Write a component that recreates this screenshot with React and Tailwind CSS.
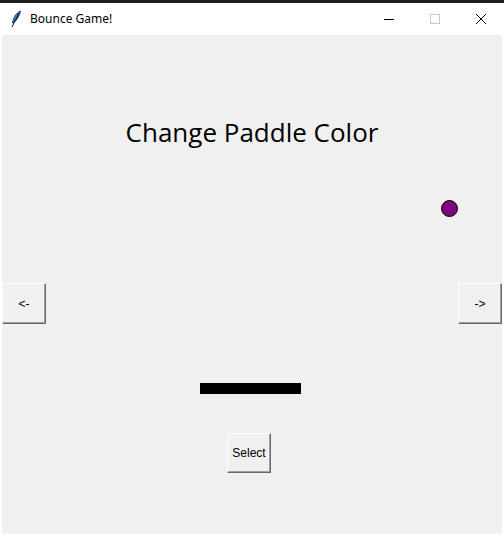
import React from "react";

const btn =
  "flex items-center justify-center bg-[#f0f0f0] border border-t-white border-l-white border-r-[#696969] border-b-[#696969] shadow-[inset_-1px_-1px_0_#a0a0a0] text-[12px] text-black font-['Liberation_Sans',sans-serif]";

function Feather() {
  return (
    <svg width="12" height="18" viewBox="0 0 12 18">
      <path d="M10.5 1 C6 3 3 8 2.5 13 L4 12.5 C7 10 10 5 10.5 1 Z" fill="#3b7bd8" stroke="#1a2a50" strokeWidth="0.8" />
      <path d="M9 3 L2 17" stroke="#111" strokeWidth="1" />
    </svg>
  );
}

function App() {
  return (
    <div className="w-[504px] h-[536px] bg-white overflow-hidden font-['Noto_Sans',sans-serif]">
      <div className="h-[3px] bg-[#1f1f1f]" />
      <div className="flex items-center h-[32px] text-[12px] text-black">
        <div className="ml-[10px] mr-[8px] flex items-center">
          <Feather />
        </div>
        <span>Bounce Game!</span>
        <div className="ml-auto flex items-center">
          <div className="w-[46px] flex justify-center">
            <div className="w-[10px] h-px bg-black" />
          </div>
          <div className="w-[46px] flex justify-center">
            <div className="w-[10px] h-[10px] border border-[#c8c8c8]" />
          </div>
          <div className="w-[46px] flex justify-center">
            <svg width="12" height="12" viewBox="0 0 12 12">
              <path d="M1 1 L11 11 M11 1 L1 11" stroke="#000" strokeWidth="1" />
            </svg>
          </div>
        </div>
      </div>
      <div className="relative ml-[2px] w-[500px] h-[499px] bg-[#f0f0f0] flex flex-col">
        <h1 className="mt-[81px] text-center text-[26px] leading-[32px] font-medium text-black font-['Comic_Sans_MS','Open_Sans',sans-serif]">
          Change Paddle Color
        </h1>
        <div className="mt-[135px] flex justify-between">
          <button className={`${btn} w-[44px] h-[41px]`}>&lt;-</button>
          <button className={`${btn} w-[44px] h-[41px]`}>-&gt;</button>
        </div>
        <div className="mt-[59px] ml-[198px] w-[101px] h-[11px] bg-black" />
        <button className={`${btn} mt-[39px] ml-[225px] w-[44px] h-[40px]`}>Select</button>
        <div className="absolute left-[439px] top-[165px] w-[17px] h-[17px] rounded-full bg-[#800080] border border-black" />
      </div>
    </div>
  );
}

export default App;
